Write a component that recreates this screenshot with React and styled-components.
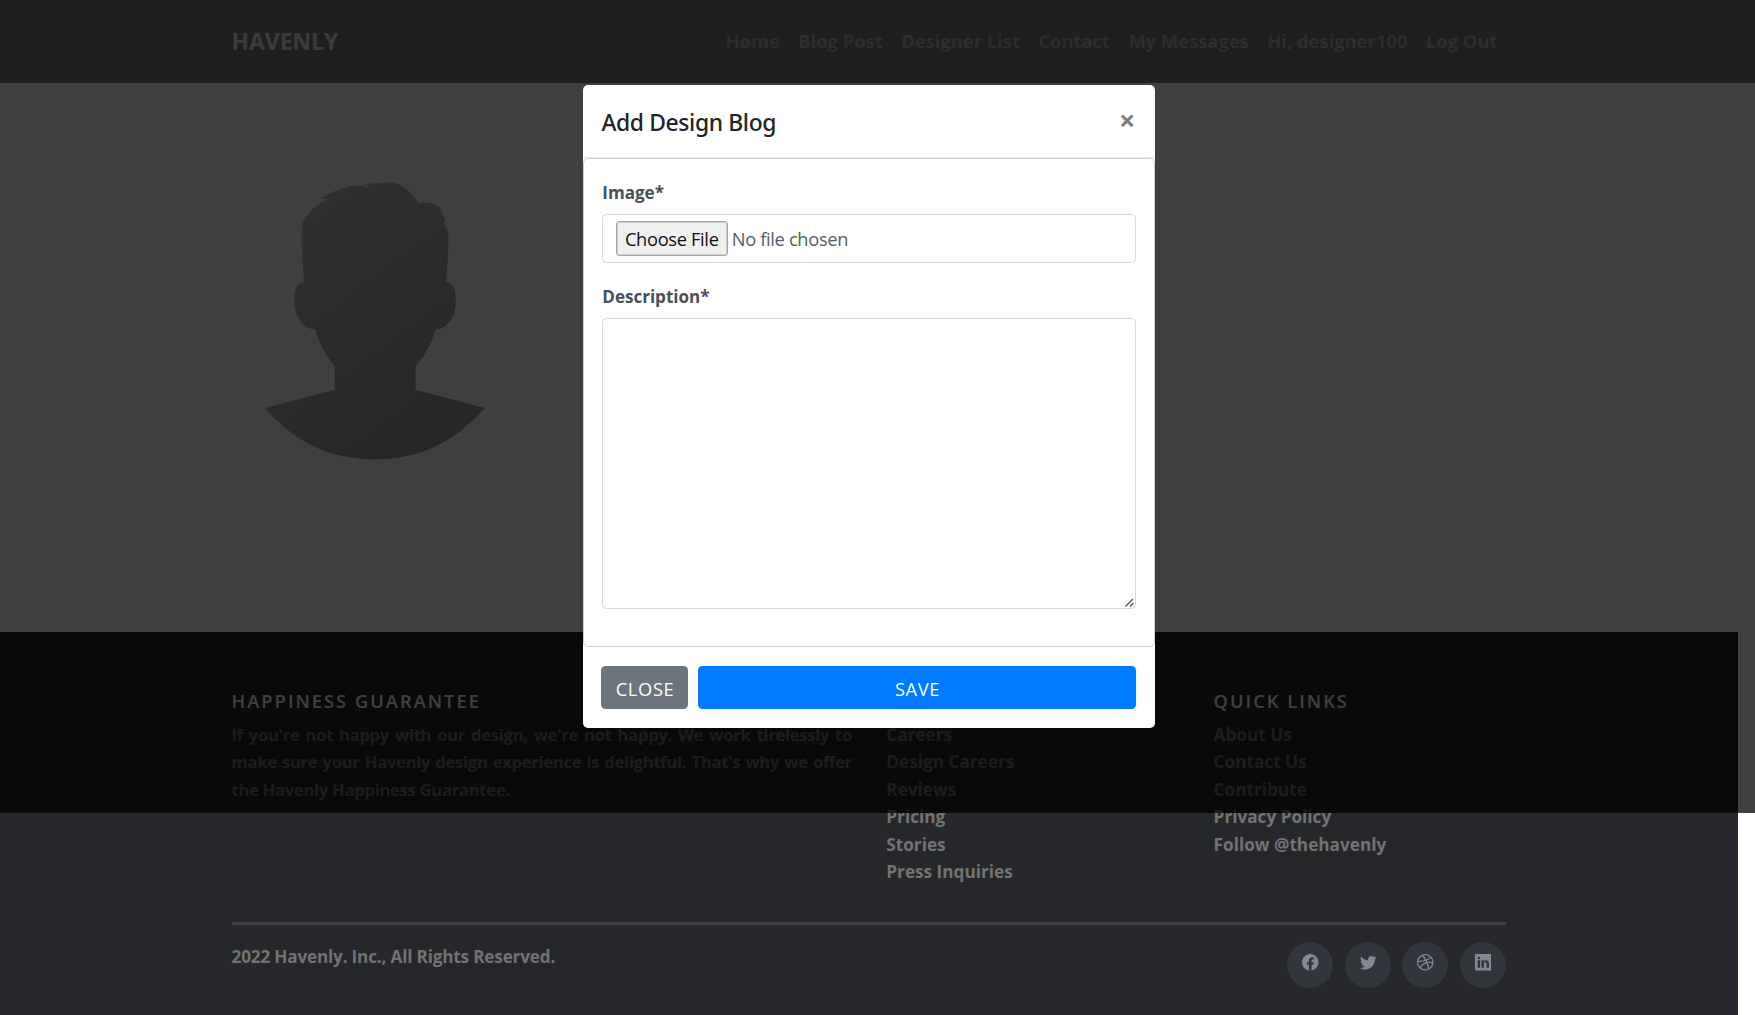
import React from 'react';
import styled, { createGlobalStyle } from 'styled-components';
import { BsFacebook, BsTwitter, BsDribbble, BsLinkedin } from 'react-icons/bs';

const GlobalStyle = createGlobalStyle`
  *, *::before, *::after { box-sizing: border-box; }
  html, body { margin: 0; height: 1015px; overflow: hidden; background: #fff; }
  body { font-family: 'Open Sans', 'Noto Sans', sans-serif; font-size: 17.2px; }
`;

const Page = styled.div`
  position: relative;
  height: 1015px;
  overflow: hidden;
  display: flex;
  flex-direction: column;
  background: #fff;
`;

const Container = styled.div`
  width: 1274.4px;
  margin-left: 231.5px;
`;

const Nav = styled.nav`
  height: 83px;
  flex: none;
  background: #7e7e7e;
`;

const NavInner = styled(Container)`
  height: 100%;
  display: flex;
  align-items: center;
  justify-content: space-between;
`;

const Brand = styled.a`
  font-size: 22.9px;
  font-weight: 700;
  color: #ededed;
`;

const NavLinks = styled.div`
  display: flex;
  margin-right: -0.8px;
  padding-bottom: 2px;
`;

const NavLink = styled.a`
  padding: 0 9.2px;
  font-size: 18.33px;
  line-height: 27.5px;
  font-weight: 700;
  letter-spacing: 0.03px;
  color: #b4b4b4;
`;

const Profile = styled.main`
  height: 549px;
  flex: none;
  padding: 97px 0 0 263px;
`;

const Avatar = styled.svg`
  display: block;
  width: 224px;
  height: 280px;
`;

const FooterBar = styled.footer`
  width: 1737.5px;
  height: 383px;
  flex: none;
  padding-top: 55px;
  background: #26272b;
  color: #737373;
`;

const Columns = styled.div`
  display: grid;
  grid-template-columns: 620.5px 293px 293px;
  column-gap: 34.3px;
  height: 235px;
`;

const FooterHeading = styled.h6`
  margin: 0 0 6.6px;
  height: 27px;
  line-height: 27px;
  font-size: 18.3px;
  font-weight: 600;
  letter-spacing: 2.02px;
  color: #fff;
`;

const About = styled.p`
  margin: 0;
  font-size: 16.6px;
  line-height: 27.5px;
  font-weight: 700;
  letter-spacing: -0.28px;
  text-align: justify;
`;

const LinkList = styled.div`
  display: flex;
  flex-direction: column;
  padding-top: ${(p) => (p.$untitled ? '33.6px' : '0')};
`;

const FooterLink = styled.a`
  font-size: 17.2px;
  line-height: 27.5px;
  font-weight: 700;
`;

const Rule = styled.hr`
  margin: 0 0 17px;
  height: 3px;
  border: 0;
  background: #404145;
`;

const Bottom = styled.div`
  display: flex;
  justify-content: space-between;
  align-items: flex-start;
`;

const Copyright = styled.p`
  margin: 0;
  padding-top: 1px;
  line-height: 27.5px;
  font-size: 17.2px;
  font-weight: 700;
  letter-spacing: -0.2px;
`;

const Socials = styled.div`
  display: flex;
  gap: 11.5px;
`;

const Social = styled.a`
  width: 46px;
  height: 46px;
  padding-top: 12px;
  border-radius: 50%;
  display: flex;
  justify-content: center;
  align-items: flex-start;
  background: #33353d;
  color: #818a91;
  font-size: 16.5px;
`;

const Backdrop = styled.div`
  position: absolute;
  top: 0;
  left: 0;
  right: 0;
  height: 813px;
  padding: 85px 17.5px 0 0;
  background: rgba(0, 0, 0, 0.752);
`;

const Dialog = styled.section`
  width: 572px;
  height: 643px;
  margin: 0 auto;
  display: flex;
  flex-direction: column;
  background: #fff;
  border-radius: 5px;
`;

const DialogHeader = styled.header`
  height: 73px;
  padding: 2px 18.5px 0 18.7px;
  display: flex;
  align-items: center;
  justify-content: space-between;
  border-bottom: 1px solid #e4e7ea;
`;

const Title = styled.h5`
  margin: 0;
  font-family: 'Noto Sans', sans-serif;
  font-size: 22.9px;
  font-weight: 500;
  letter-spacing: -0.38px;
  color: #212529;
`;

const Dismiss = styled.button`
  padding: 0 1px 4px;
  border: 0;
  background: none;
  font: 700 28.5px/1 'Open Sans', sans-serif;
  color: #7f7f7f;
`;

const DialogBody = styled.div`
  height: 489px;
  padding: 21px 18px 0;
  display: flex;
  flex-direction: column;
  border: 1px solid #cdd1d5;
  border-radius: 5px;
`;

const Label = styled.label`
  height: 26px;
  margin-bottom: 8px;
  padding-left: 0.6px;
  line-height: 26px;
  font-size: 17.1px;
  font-weight: 700;
  letter-spacing: -0.04px;
  color: #495057;
`;

const FileField = styled.div`
  height: 49px;
  margin-bottom: 21px;
  padding: 0 13px;
  display: flex;
  align-items: center;
  gap: 4px;
  border: 1px solid #d3d8dd;
  border-radius: 4.5px;
  font-size: 18.3px;
  letter-spacing: -0.34px;
  color: #575e65;
`;

const FileButton = styled.button`
  width: 112px;
  height: 35px;
  padding: 0;
  border: 1px solid #a3a3a3;
  border-radius: 3px;
  box-shadow: inset 0 0 0 1px #cecece;
  background: #efefef;
  font: inherit;
  letter-spacing: -0.34px;
  color: #111;
`;

const TextFrame = styled.div`
  position: relative;
  height: 291px;
`;

const TextArea = styled.textarea`
  display: block;
  width: 100%;
  height: 100%;
  resize: none;
  border: 1px solid #d3d8dd;
  border-radius: 4.5px;
  outline: 0;
`;

const Grip = styled.svg`
  position: absolute;
  right: 2px;
  bottom: 2px;
  width: 9px;
  height: 9px;
`;

const DialogFooter = styled.footer`
  flex: 1;
  padding: 19px 18.3px 0;
  display: flex;
  align-items: flex-start;
  gap: 9.5px;
`;

const Action = styled.button`
  flex: ${(p) => (p.$primary ? '1' : '0 0 87px')};
  height: 43px;
  padding: 1px 0 0 1px;
  border: 0;
  border-radius: 4.5px;
  background: ${(p) => (p.$primary ? '#007bff' : '#6c757d')};
  font: 400 18.3px/27px 'Open Sans', sans-serif;
  letter-spacing: 0.65px;
  color: #fff;
`;

const navItems = ['Home', 'Blog Post', 'Designer List', 'Contact', 'My Messages', 'Hi, designer100', 'Log Out'];
const companyLinks = ['Careers', 'Design Careers', 'Reviews', 'Pricing', 'Stories', 'Press Inquiries'];
const quickLinks = ['About Us', 'Contact Us', 'Contribute', 'Privacy Policy', 'Follow @thehavenly'];
const socialIcons = [BsFacebook, BsTwitter, BsDribbble, BsLinkedin];

function Silhouette() {
  return (
    <Avatar viewBox="190 60 672 840">
      <defs>
        <linearGradient id="shade" x1="0.2" y1="0" x2="0.8" y2="1">
          <stop offset="0" stopColor="#c0c0c0" />
          <stop offset="1" stopColor="#969696" />
        </linearGradient>
      </defs>
      <path
        fill="url(#shade)"
        d="M359 116 Q410 88 452 79 Q480 76 512 82 L498 73 Q540 67 583 67 Q628 83 656 130 Q690 122 720 142 Q732 162 738 190 L728 187 Q743 200 746 222 Q747 295 739 365 Q760 370 766 390 Q774 445 756 476 Q737 508 708 508 Q693 567 648 619 L648 689 L855 744 C760 852 655 898 525 898 C390 898 290 850 195 744 L405 689 L405 619 Q363 571 346 507 Q316 511 296 473 Q282 450 284 406 Q287 368 314 366 Q303 280 307 190 Q325 148 384 117 Z"
      />
    </Avatar>
  );
}

export default function App() {
  return (
    <Page>
      <GlobalStyle />
      <Nav>
        <NavInner>
          <Brand>HAVENLY</Brand>
          <NavLinks>
            {navItems.map((item) => (
              <NavLink key={item}>{item}</NavLink>
            ))}
          </NavLinks>
        </NavInner>
      </Nav>
      <Profile>
        <Silhouette />
      </Profile>
      <FooterBar>
        <Container>
          <Columns>
            <div>
              <FooterHeading>HAPPINESS GUARANTEE</FooterHeading>
              <About>
                If you're not happy with our design, we're not happy. We work tirelessly to make sure your Havenly
                design experience is delightful. That's why we offer the Havenly Happiness Guarantee.
              </About>
            </div>
            <LinkList $untitled>
              {companyLinks.map((item) => (
                <FooterLink key={item}>{item}</FooterLink>
              ))}
            </LinkList>
            <LinkList>
              <FooterHeading>QUICK LINKS</FooterHeading>
              {quickLinks.map((item) => (
                <FooterLink key={item}>{item}</FooterLink>
              ))}
            </LinkList>
          </Columns>
          <Rule />
          <Bottom>
            <Copyright>2022 Havenly. Inc., All Rights Reserved.</Copyright>
            <Socials>
              {socialIcons.map((Icon, i) => (
                <Social key={i}>
                  <Icon />
                </Social>
              ))}
            </Socials>
          </Bottom>
        </Container>
      </FooterBar>
      <Backdrop>
        <Dialog>
          <DialogHeader>
            <Title>Add Design Blog</Title>
            <Dismiss>×</Dismiss>
          </DialogHeader>
          <DialogBody>
            <Label>Image*</Label>
            <FileField>
              <FileButton>Choose File</FileButton>
              <span>No file chosen</span>
            </FileField>
            <Label>Description*</Label>
            <TextFrame>
              <TextArea />
              <Grip viewBox="0 0 9 9" stroke="#555" strokeWidth="1.4">
                <path d="M0.5 8.5L8 1M5 8.5L8.5 5" />
              </Grip>
            </TextFrame>
          </DialogBody>
          <DialogFooter>
            <Action>CLOSE</Action>
            <Action $primary>SAVE</Action>
          </DialogFooter>
        </Dialog>
      </Backdrop>
    </Page>
  );
}
